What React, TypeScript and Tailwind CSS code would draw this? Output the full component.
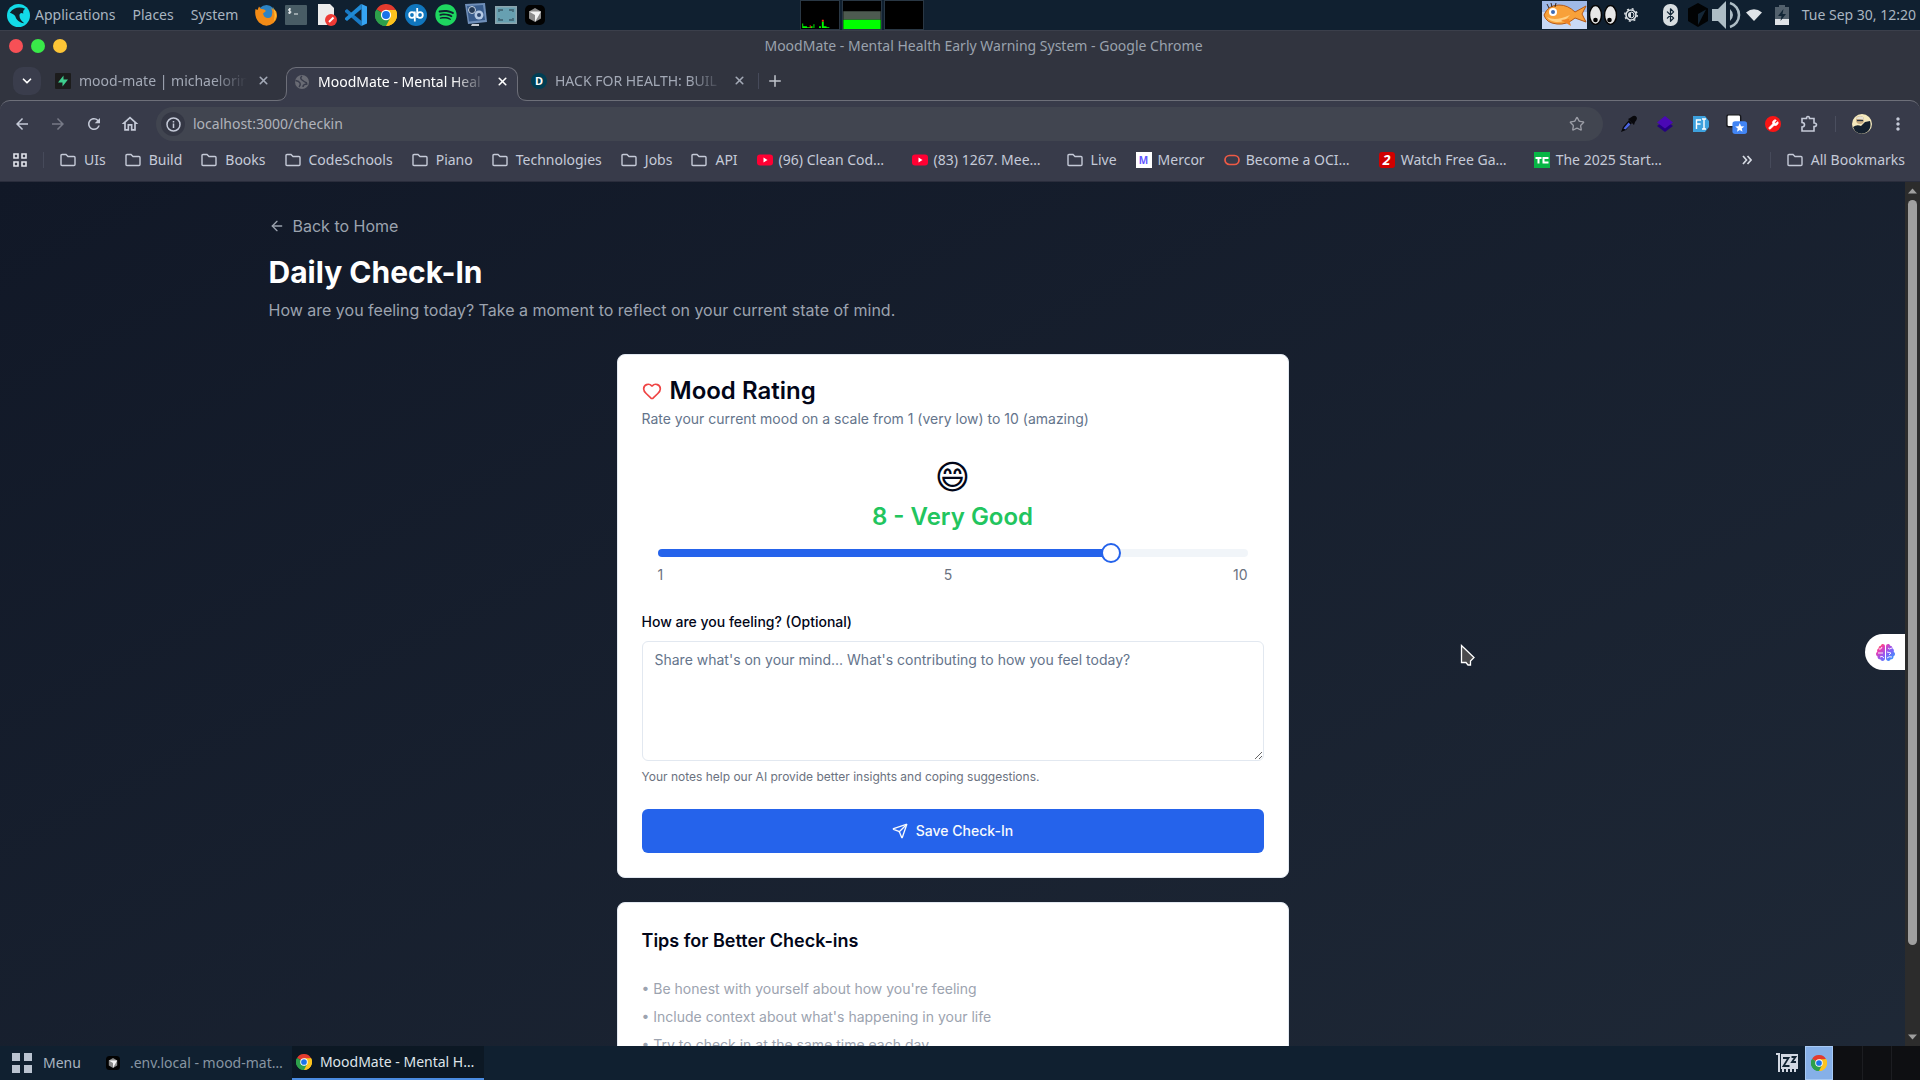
import { useState } from 'react'
import type { ReactNode } from 'react'
import clsx from 'clsx'
import { ArrowLeft, Bluetooth, ChevronDown, Heart, Plus, Send, Star, Wrench, X } from 'lucide-react'
import { FaBrain, FaSpotify } from 'react-icons/fa'
import { MdOutlineHome, MdRefresh, MdArrowBack, MdArrowForward, MdMoreVert } from 'react-icons/md'

const moodLabels = ['Terrible', 'Very Low', 'Low', 'Below Average', 'Okay', 'Fair', 'Good', 'Very Good', 'Great', 'Amazing']

const tips = [
  "Be honest with yourself about how you're feeling",
  "Include context about what's happening in your life",
  'Try to check in at the same time each day',
]

const bookmarks: { label: string; icon?: 'youtube' | 'mercor' | 'oracle' | 'two' | 'tc' }[] = [
  { label: 'UIs' },
  { label: 'Build' },
  { label: 'Books' },
  { label: 'CodeSchools' },
  { label: 'Piano' },
  { label: 'Technologies' },
  { label: 'Jobs' },
  { label: 'API' },
  { label: '(96) Clean Cod…', icon: 'youtube' },
  { label: '(83) 1267. Mee…', icon: 'youtube' },
  { label: 'Live' },
  { label: 'Mercor', icon: 'mercor' },
  { label: 'Become a OCI…', icon: 'oracle' },
  { label: 'Watch Free Ga…', icon: 'two' },
  { label: 'The 2025 Start…', icon: 'tc' },
]

export default function App() {
  return (
    <div className="flex h-screen flex-col overflow-hidden bg-[#102030] font-['Noto_Sans',sans-serif] text-sm">
      <TopPanel />
      <BrowserHeader />
      <main className="relative flex min-h-0 flex-1">
        <div className="min-w-0 flex-1 overflow-hidden">
          <CheckInPage />
        </div>
        <Scrollbar />
        <button
          aria-label="Open assistant"
          className="absolute top-[452px] right-[15px] flex h-9 w-10 items-center justify-center rounded-l-full bg-white"
        >
          <svg width="0" height="0" className="absolute">
            <linearGradient id="brain" x1="0" y1="0" x2="1" y2="1">
              <stop offset="0" stopColor="#ff9a1f" />
              <stop offset="0.25" stopColor="#ee3aae" />
              <stop offset="0.55" stopColor="#8b5cf6" />
              <stop offset="1" stopColor="#1fa8ff" />
            </linearGradient>
          </svg>
          <span className="relative">
            <FaBrain size={19} fill="url(#brain)" />
            <svg className="absolute inset-0" width="19" height="19" viewBox="0 0 19 19" fill="none" stroke="#fff" strokeWidth="0.9">
              <path d="M3 6Q5 7 6 4M2 10H7M4 14Q6 12 8 15M16 5Q13 7 12 5M11 9L15 10L13 12M16 14Q13 13 11 15" />
            </svg>
          </span>
        </button>
        <svg className="absolute top-[462px] left-[1460px]" width="16" height="24" viewBox="0 0 16 24">
          <path d="M1.500 1.500V18.500H6L8 21H10.500V17L14 13.500Z" fill="#4a4a4c" stroke="#fff" strokeWidth="1.300" />
        </svg>
      </main>
      <Taskbar />
    </div>
  )
}

function CheckInPage() {
  const [mood, setMood] = useState(8)
  const [notes, setNotes] = useState('')
  const ratio = (mood - 1) / 9

  return (
    <div className="bg-gradient-to-br from-[#111827] to-[#1f2937] font-['Inter',sans-serif] text-base">
      <div className="mx-auto max-w-[1400px] px-4 pt-8 pb-16">
        <a href="#home" className="mb-4 flex w-fit items-center gap-2 text-[#9ca3af]">
          <ArrowLeft className="h-4 w-4" />
          Back to Home
        </a>
        <h1 className="text-3xl font-bold text-white">Daily Check-In</h1>
        <p className="mt-2 text-[#9ca3af]">How are you feeling today? Take a moment to reflect on your current state of mind.</p>

        <div className="mx-auto mt-8 max-w-2xl space-y-6">
          <section className="rounded-lg border border-slate-200 bg-white p-6">
            <h2 className="flex items-center gap-2 text-2xl leading-6 font-semibold text-slate-950">
              <Heart className="h-5 w-5 text-[#ef4444]" />
              Mood Rating
            </h2>
            <p className="mt-1.5 text-sm text-[#64748b]">Rate your current mood on a scale from 1 (very low) to 10 (amazing)</p>

            <form className="mt-6" onSubmit={(e) => e.preventDefault()}>
              <div className="text-center">
                <div className="h-10 font-['DejaVu_Sans',sans-serif] text-[34px] leading-[48px] text-slate-950">😄</div>
                <div className="mt-2 text-2xl font-semibold text-[#22c55e]">
                  {mood} - {moodLabels[mood - 1]}
                </div>
              </div>
              <div className="mt-4 px-4">
                <input
                  type="range"
                  min={1}
                  max={10}
                  value={mood}
                  aria-label="Mood rating"
                  onChange={(e) => setMood(Number(e.target.value))}
                  style={{
                    background: `linear-gradient(to right, #2563eb calc(10px + (100% - 20px) * ${ratio}), #f1f5f9 0)`,
                  }}
                  className="block h-2 w-full appearance-none rounded-full [&::-webkit-slider-thumb]:h-5 [&::-webkit-slider-thumb]:w-5 [&::-webkit-slider-thumb]:appearance-none [&::-webkit-slider-thumb]:rounded-full [&::-webkit-slider-thumb]:border-2 [&::-webkit-slider-thumb]:border-[#2563eb] [&::-webkit-slider-thumb]:bg-white"
                />
                <div className="mt-2 flex justify-between text-sm text-[#6b7280]">
                  <span>1</span>
                  <span>5</span>
                  <span>10</span>
                </div>
              </div>

              <label htmlFor="notes" className="mt-6 block text-sm leading-[26px] font-medium text-slate-950">
                How are you feeling? (Optional)
              </label>
              <textarea
                id="notes"
                value={notes}
                onChange={(e) => setNotes(e.target.value)}
                placeholder="Share what's on your mind... What's contributing to how you feel today?"
                className="mt-1.5 block min-h-[120px] w-full rounded-md border border-slate-200 bg-white px-3 py-2 text-sm text-slate-950 placeholder:text-[#64748b]"
              />
              <p className="mt-2 text-xs text-[#6b7280]">Your notes help our AI provide better insights and coping suggestions.</p>

              <button className="mt-6 flex h-11 w-full items-center justify-center gap-2 rounded-md bg-[#2563eb] text-sm font-medium text-slate-50">
                <Send className="h-4 w-4" />
                Save Check-In
              </button>
            </form>
          </section>

          <section className="rounded-lg border border-slate-200 bg-white p-6">
            <h3 className="text-lg font-semibold text-slate-950">Tips for Better Check-ins</h3>
            <ul className="mt-6 space-y-2 text-sm text-[#9ca3af]">
              {tips.map((tip) => (
                <li key={tip}>• {tip}</li>
              ))}
            </ul>
          </section>
        </div>
      </div>
    </div>
  )
}

function Scrollbar() {
  return (
    <div className="flex w-[15px] flex-col items-center justify-between bg-[#2c2c2c] py-[6px]">
      <svg width="9" height="6" viewBox="0 0 9 6">
        <path d="M0 5.500L4.500 0.500L9 5.500Z" fill="#9f9f9f" />
      </svg>
      <div className="my-[6px] w-full flex-1 px-[3px]">
        <div className="h-[90%] rounded-full bg-[#9f9f9f]" />
      </div>
      <svg width="9" height="6" viewBox="0 0 9 6">
        <path d="M0 0.500L4.500 5.500L9 0.500Z" fill="#9f9f9f" />
      </svg>
    </div>
  )
}

function TopPanel() {
  return (
    <header className="flex h-[30px] shrink-0 items-center justify-between pr-1 pl-[7px] text-[#a9b5c0]">
      <div className="flex items-center">
        <svg width="23" height="23" viewBox="0 0 24 24">
          <circle cx="12" cy="12" r="12" fill="#12dbe8" />
          <path d="M3 9C7 3.500 13 2.500 19 5C17 6 16.500 8 17 10C15 8.500 13 9.500 13 12C13 15 15 18 18 20C13 19.500 10 17 8.500 12.500C7 10.500 5 9.500 3 9Z" fill="#10202b" />
        </svg>
        <nav className="ml-[5px] flex gap-[17px]">
          <button>Applications</button>
          <button>Places</button>
          <button>System</button>
        </nav>
        <div className="ml-[17px] flex items-center gap-2">
          <FirefoxIcon />
          <TerminalIcon />
          <svg width="22" height="22" viewBox="0 0 22 22">
            <path d="M3 0H15L19 4V21H3Z" fill="#ececec" />
            <circle cx="16" cy="16" r="6" fill="#ee3a35" />
            <path d="M14 18L18.500 13.500" stroke="#fff" strokeWidth="2" />
          </svg>
          <svg width="22" height="22" viewBox="0 0 22 22">
            <path d="M0 6.500L2 5L16.500 17V22L15.500 21.500L0 8Z" fill="#1879c4" />
            <path d="M0 15.500L2 17L16.500 5V0L15.500 0.500L0 14Z" fill="#1f8ad6" />
            <path d="M16.500 0L22 2.500V19.500L16.500 22Z" fill="#35a4f3" />
          </svg>
          <ChromeIcon size={22} />
          <svg width="22" height="22" viewBox="0 0 22 22">
            <circle cx="11" cy="11" r="11" fill="#1076bd" />
            <g fill="none" stroke="#fff" strokeWidth="1.800">
              <circle cx="7" cy="11" r="2.800" />
              <path d="M9.800 7.500V17.500M12.200 4V14" />
              <circle cx="15" cy="11" r="2.800" />
            </g>
          </svg>
          <FaSpotify size={22} color="#1ed760" />
          <svg width="22" height="24" viewBox="0 0 22 24">
            <path d="M0 1L20 0L22 19L3 21Z" fill="#6f8fb9" />
            <path d="M2 3L18 2L20 17L4 18.500Z" fill="#385c8c" />
            <circle cx="7" cy="7" r="3.500" fill="#263c58" stroke="#c6d4e4" />
            <circle cx="14" cy="12" r="4.500" fill="#b5cae4" />
            <circle cx="14" cy="12" r="2" fill="#2d4a74" />
            <path d="M7 21H14V23H6Z" fill="#c2c8cf" />
          </svg>
          <svg width="22" height="22" viewBox="0 0 22 22">
            <path d="M0 2H22V20H0Z" fill="#8ba4ad" />
            <path d="M1.500 3.500H20.500V18.500H1.500Z" fill="#67a0b1" />
            <path d="M4 8V6H8M14 6H18V8M18 14V16H14M8 16H4V14" fill="none" stroke="#456b7a" strokeWidth="1.800" />
          </svg>
          <CursorAppIcon size={20} />
        </div>

        <div className="ml-[255px] flex gap-[2px]">
          <svg width="40" height="30" viewBox="0 0 40 30" className="border border-[#293744] bg-black">
            <path d="M1 29V24H2V27H6V28H10V27H12V29ZM13 29V25H14V29H19V27H21V29H22V22H24V27H27V28H30V29Z" fill="#00ff00" />
            <path d="M9 26H10V29H9ZM22 20H24V22H22Z" fill="#ff2418" />
          </svg>
          <svg width="40" height="30" viewBox="0 0 40 30" className="border border-[#293744] bg-black">
            <path d="M0 11H40V20H0Z" fill="#4d5a50" />
            <path d="M0 20H40V30H0Z" fill="#00ff00" />
          </svg>
          <svg width="40" height="30" className="border border-[#293744] bg-black" />
        </div>
      </div>

      <div className="flex items-center">
        <FishIcon />
        <svg className="ml-[2px]" width="28" height="20" viewBox="0 0 28 20">
          <ellipse cx="6.500" cy="10" rx="6" ry="9.500" fill="#e7e7e7" stroke="#050505" strokeWidth="1.500" />
          <ellipse cx="21.500" cy="10" rx="6" ry="9.500" fill="#e7e7e7" stroke="#050505" strokeWidth="1.500" />
          <circle cx="6.500" cy="15" r="2.300" />
          <circle cx="20.500" cy="15" r="2.300" />
        </svg>
        <svg className="ml-[7px]" width="14" height="14" viewBox="0 0 14 14" fill="none" stroke="#dbe0e4">
          <circle cx="7" cy="7" r="5" strokeWidth="1.600" />
          <circle cx="7" cy="7" r="6.200" strokeWidth="1.500" strokeDasharray="2 2.870" />
          <path d="M7 4A3 3 0 0 0 7 10Z" fill="#dbe0e4" stroke="none" />
          <path d="M7 4A3 3 0 0 1 7 10" strokeWidth="1" />
        </svg>
        <span className="ml-[25px] flex h-[22px] w-[15px] items-center justify-center rounded-[7px] bg-[#d8dde0] text-[#122636]">
          <Bluetooth size={16} />
        </span>
        <svg className="ml-[10px]" width="20" height="24" viewBox="0 0 20 24">
          <path d="M10 0L20 5.500V18L10 24L0 18V5.500Z" fill="#020304" />
          <path d="M10 11L18 6.500L10 22Z" fill="#142636" />
        </svg>
        <svg className="ml-1" width="29" height="28" viewBox="0 0 29 28">
          <path d="M0 8H6L14 0V28L6 20H0Z" fill="#aebdc5" />
          <path d="M18 8Q24 14 18 20ZM18 8V20" fill="#aebdc5" />
          <path d="M18 2A12.500 12.500 0 0 1 18 26" fill="none" stroke="#aebdc5" strokeWidth="2.600" />
        </svg>
        <svg className="ml-[5px]" width="16" height="12" viewBox="0 0 16 12">
          <path d="M0 3.500Q8 -3 16 3.500L8 12Z" fill="#dfe3e7" />
        </svg>
        <svg className="ml-[13px]" width="14" height="20" viewBox="0 0 14 20">
          <path d="M4 0H10V2H14V20H0V2H4Z" fill="#52606c" />
          <path d="M0 14H14V20H0Z" fill="#dfe3e7" />
          <path d="M8.500 4L3 11H6.500L5.500 16L11 9H7.500Z" fill="#122636" />
        </svg>
        <time className="ml-[13px]">Tue Sep 30, 12:20</time>
      </div>
    </header>
  )
}

function BrowserHeader() {
  return (
    <div className="shrink-0 border-t border-[#3b3f4b] bg-[#31343f]">
      <div className="flex h-[30px] items-center text-[#9aa2ad]">
        <div className="flex w-[68px] gap-2 pl-[9px]">
          <button aria-label="Close" className="h-[14px] w-[14px] rounded-full bg-[#f75056]" />
          <button aria-label="Maximize" className="h-[14px] w-[14px] rounded-full bg-[#39ea49]" />
          <button aria-label="Minimize" className="h-[14px] w-[14px] rounded-full bg-[#fdc536]" />
        </div>
        <div className="flex-1 pr-[21px] text-center">MoodMate - Mental Health Early Warning System - Google Chrome</div>
      </div>

      <div className="flex h-[39px] items-end pl-[13px]">
        <button aria-label="Search tabs" className="mb-[5px] flex h-7 w-7 items-center justify-center rounded-[10px] bg-[#3a3d4c] text-white">
          <ChevronDown size={14} strokeWidth={3} />
        </button>
        <div className="ml-[7px] flex items-end gap-[6px]">
          <Tab
            title="mood-mate | michaelorin"
            icon={
              <svg width="16" height="16" viewBox="0 0 16 16">
                <rect width="16" height="16" rx="1" fill="#1c1c1c" />
                <path d="M8.500 2.500V6.500H13L7.500 13.500V9.500H3Z" fill="#3ecf8e" />
              </svg>
            }
          />
          <Tab
            active
            title="MoodMate - Mental Heal"
            icon={
              <svg width="16" height="16" viewBox="0 0 16 16">
                <circle cx="8" cy="8" r="7" fill="#696b74" />
                <path d="M1.500 6.500Q5 7 6 9T5 13M8 2Q5.500 4 8 6T13 9M9 13Q9 10 13.500 10" fill="none" stroke="#383b4a" strokeWidth="1.500" />
              </svg>
            }
          />
          <Tab
            title="HACK FOR HEALTH: BUIL"
            icon={
              <span className="flex h-4 w-4 items-center justify-center rounded-full bg-[#003e54] text-[11px] leading-4 font-bold text-white">D</span>
            }
          />
        </div>
        <span className="mb-[11px] ml-[2px] h-4 w-px bg-[#464a5a]" />
        <button aria-label="New tab" className="mb-[10px] ml-[7px] text-[#c0c4cd]">
          <Plus size={18} />
        </button>
      </div>

      <div className="rounded-t-[10px] border-t border-[#6d6f79] bg-[#383b4a] text-[#c5cad8]">
        <div className="flex h-[46px] items-center px-[12px]">
          <div className="flex gap-4">
            <IconButton label="Back"><MdArrowBack size={18} /></IconButton>
            <IconButton label="Forward"><MdArrowForward size={18} className="text-[#777a87]" /></IconButton>
            <IconButton label="Reload"><MdRefresh size={18} /></IconButton>
            <IconButton label="Home"><MdOutlineHome size={20} /></IconButton>
          </div>
          <div className="ml-4 flex h-[34px] flex-1 items-center rounded-full bg-[#414550] pr-4 pl-[5px]">
            <span className="flex h-6 w-6 items-center justify-center rounded-full bg-[#343744]">
              <svg width="15" height="15" viewBox="0 0 15 15" fill="none" stroke="#c5cad8" strokeWidth="1.500">
                <circle cx="7.500" cy="7.500" r="6.500" />
                <path d="M7.500 6.500V11M7.500 4V5.500" />
              </svg>
            </span>
            <input
              aria-label="Address"
              defaultValue="localhost:3000/checkin"
              className="ml-2 min-w-0 flex-1 bg-transparent text-sm text-[#b0b3bb]"
            />
            <IconButton label="Bookmark this page"><Star size={16} className="text-[#9b9da6]" /></IconButton>
          </div>
          <div className="ml-4 flex items-center gap-4">
            <IconButton label="Color picker">
              <svg width="18" height="18" viewBox="0 0 18 18">
                <path d="M1 17L3 12L9 5L12 8L6 15Z" fill="#08080c" />
                <path d="M3.500 13.500L8.500 7.500L10.500 9.500L5.500 14.500Z" fill="#4c66e2" />
                <path d="M8 4L10 3L13 1Q16 0 17 3Q17 5 15 7L14 10Z" fill="#08080c" />
              </svg>
            </IconButton>
            <IconButton label="Layers">
              <svg width="18" height="18" viewBox="0 0 18 18">
                <path d="M1 11L9 5L17 11L9 17Z" fill="#250082" />
                <path d="M1 7.500L9 1L17 7.500L9 13.500Z" fill="#4a08b5" />
              </svg>
            </IconButton>
            <IconButton label="Font identifier">
              <svg width="16" height="16" viewBox="0 0 16 16">
                <path d="M0 0H12L16 5V11L12 16H0Z" fill="#3ea1dd" />
                <path d="M3.500 13V4H8M3.500 8H7.500M9 3H13M9 13H13M11 3V13" stroke="#fff" strokeWidth="1.400" fill="none" />
              </svg>
            </IconButton>
            <IconButton label="Tab saver">
              <svg width="22" height="22" viewBox="0 0 24 22" className="shrink-0">
                <rect x="1" y="1" width="15" height="13" rx="2" fill="#fff" stroke="#15161b" strokeWidth="1.500" />
                <rect x="7" y="8" width="16" height="14" rx="3" fill="#4285f4" />
                <path d="M15 10L16.400 13.500L20 13.800L17.200 16L18 19.500L15 17.500L12 19.500L12.800 16L10 13.800L13.600 13.500Z" fill="#fff" />
              </svg>
            </IconButton>
            <IconButton label="Toolbox">
              <span className="flex h-4 w-4 items-center justify-center rounded-full bg-[#fa1515]">
                <Wrench size={11} fill="white" className="text-white" />
              </span>
            </IconButton>
            <IconButton label="Extensions">
              <svg width="18" height="18" viewBox="0 0 18 18" fill="none" stroke="#c5cad8" strokeWidth="1.600">
                <path d="M2 3.500H6.500Q6.500 1.500 8 1.500T9.500 3.500H14V8Q16.500 8 16.500 9.700T14 11.500V16H2V12Q4.500 12 4.500 9.800T2 7.500Z" />
              </svg>
            </IconButton>
          </div>
          <span className="ml-4 h-4 w-px bg-[#4a4e5e]" />
          <button aria-label="Profile" className="ml-4">
            <svg width="20" height="20" viewBox="0 0 20 20">
              <circle cx="10" cy="10" r="10" fill="#f5e9bd" />
              <path d="M1 13Q5 10 9 12L13 8L18 7Q20 14 15 18Q9 22 3 17Z" fill="#14202e" />
              <circle cx="8" cy="6" r="4" fill="#c8ac82" />
              <path d="M4 5Q6 1 11 3L12 6L8 5Z" fill="#e7e2d4" />
              <path d="M5 6.500H11" stroke="#2a3642" strokeWidth="1.300" />
            </svg>
          </button>
          <span className="ml-4">
            <IconButton label="Menu"><MdMoreVert size={20} /></IconButton>
          </span>
        </div>

        <nav className="flex h-[35px] items-start justify-between border-b border-[#2a2d3c] pt-[3px] pr-[15px] pl-[13px]">
          <div className="flex items-center">
            <button aria-label="Apps">
              <svg width="14" height="14" viewBox="0 0 14 14" fill="none" stroke="#e1e4eb" strokeWidth="1.600">
                <path d="M1 1H5V5H1ZM9 1H13V5H9ZM1 9H5V13H1ZM9 9H13V13H9Z" />
              </svg>
            </button>
            <span className="mr-4 ml-4 h-4 w-px bg-[#464a5a]" />
            <div className="flex gap-[19px]">
              {bookmarks.map((b) => (
                <a key={b.label} href="#bookmark" className={clsx('flex items-center whitespace-nowrap', b.icon ? 'gap-[6px]' : 'gap-2')}>
                  <BookmarkIcon icon={b.icon} />
                  <span className={b.label.endsWith('…') ? 'w-[114px]' : ''}>{b.label}</span>
                </a>
              ))}
            </div>
          </div>
          <div className="flex items-center">
            <button aria-label="More bookmarks">
              <svg width="10" height="10" viewBox="0 0 10 10" fill="none" stroke="#d5d9e2" strokeWidth="1.700">
                <path d="M1 1L4.500 5L1 9M5.500 1L9 5L5.500 9" />
              </svg>
            </button>
            <span className="mr-4 ml-[18px] h-4 w-px bg-[#464a5a]" />
            <a href="#all" className="flex items-center gap-2">
              <BookmarkIcon />
              All Bookmarks
            </a>
          </div>
        </nav>
      </div>
    </div>
  )
}

function IconButton({ label, children }: { label: string; children: ReactNode }) {
  return (
    <button aria-label={label} className="flex h-5 w-5 items-center justify-center">
      {children}
    </button>
  )
}

function Tab({ title, icon, active }: { title: string; icon: ReactNode; active?: boolean }) {
  return (
    <div
      className={clsx(
        'relative flex w-[232px] items-center pb-[6px] pl-[7px]',
        active ? 'z-10 -mb-px h-[34px] rounded-t-[10px] border border-b-0 border-[#6d6f79] bg-[#383b4a] text-white' : 'h-[33px] text-[#a3a9b6]',
      )}
    >
      {active ? (
        <>
          <TabFlare className="absolute bottom-0 -left-[10px]" />
          <TabFlare className="absolute -right-[10px] bottom-0 -scale-x-100" />
        </>
      ) : null}
      {icon}
      <a href="#tab" className="ml-2 w-[168px] whitespace-nowrap [mask-image:linear-gradient(to_right,black_80%,transparent)]">
        {title}
      </a>
      <button aria-label="Close tab" className="ml-[10px]">
        <X size={13} strokeWidth={3} />
      </button>
    </div>
  )
}

function TabFlare({ className }: { className: string }) {
  return (
    <svg width="10" height="10" viewBox="0 0 10 10" className={className}>
      <path d="M10 0V10H0V9.500Q9.500 9.500 9.500 0Z" fill="#383b4a" />
      <path d="M0 9.500Q9.500 9.500 9.500 0" fill="none" stroke="#6d6f79" />
    </svg>
  )
}

function BookmarkIcon({ icon }: { icon?: string }) {
  if (icon === 'youtube') {
    return (
      <svg width="16" height="16" viewBox="0 0 16 16">
        <rect y="2.500" width="16" height="11" rx="3" fill="#ff0033" />
        <path d="M6.500 5.500V10.500L10.500 8Z" fill="#fff" />
      </svg>
    )
  }
  if (icon === 'mercor') {
    return <span className="flex h-4 w-4 items-center justify-center bg-white text-[10px] font-bold text-[#6257ff]">M</span>
  }
  if (icon === 'oracle') {
    return (
      <svg width="16" height="16" viewBox="0 0 16 16">
        <rect x="1" y="3.500" width="14" height="9" rx="4.500" fill="none" stroke="#ee5a45" strokeWidth="1.700" />
      </svg>
    )
  }
  if (icon === 'two') {
    return <span className="flex h-4 w-4 items-center justify-center rounded-[3px] bg-[#d00000] text-[14px] leading-4 font-bold text-white italic">2</span>
  }
  if (icon === 'tc') {
    return (
      <svg width="16" height="16" viewBox="0 0 16 16">
        <rect width="16" height="16" fill="#08b545" />
        <path d="M1.500 6H7.500M4.500 6V11.500M14.500 6H9.500V10.500H14.500" fill="none" stroke="#fff" strokeWidth="2" />
      </svg>
    )
  }
  return (
    <svg width="16" height="16" viewBox="0 0 16 16">
      <path d="M1 3.500Q1 2.500 2 2.500H6L8 4.500H14Q15 4.500 15 5.500V12.500Q15 13.500 14 13.500H2Q1 13.500 1 12.500Z" fill="none" stroke="#c5cad8" strokeWidth="1.400" />
    </svg>
  )
}

function Taskbar() {
  return (
    <footer className="flex h-[34px] shrink-0 items-center justify-between">
      <div className="flex h-full items-center">
        <button className="ml-3 flex items-center gap-[11px] text-[#a9b5c0]">
          <svg width="20" height="20" viewBox="0 0 20 20">
            <path d="M0 0H8V8H0ZM12 0H20V8H12ZM0 12H8V20H0ZM12 12H20V20H12Z" fill="#bac3d0" />
          </svg>
          Menu
        </button>
        <button className="ml-[25px] flex w-[186px] items-center gap-[10px] whitespace-nowrap text-[#8795a2]">
          <CursorAppIcon size={14} />
          .env.local - mood-mat…
        </button>
        <button className="flex h-full w-48 items-center gap-2 border-b-2 border-[#4a8be0] bg-[#0c1824] pl-1 whitespace-nowrap text-[#dfe5ea]">
          <ChromeIcon size={16} />
          MoodMate - Mental H…
        </button>
      </div>
      <div className="flex h-full items-center">
        <svg width="22" height="20" viewBox="0 0 22 20">
          <path d="M0 0H4V19H2V2H0ZM5 1H22V16H20V19H18V16H16V19H14V16H12V19H10V16H8V19H6V16H5Z" fill="#d2d8e2" />
          <path d="M7 5H12.500L7.500 13H13.500M15.500 4H19.500L16 9H20" fill="none" stroke="#122433" strokeWidth="1.800" />
        </svg>
        <div className="ml-[7px] flex h-full">
          <span className="flex w-7 items-center justify-center border border-[#a8caf5] bg-[#86b0e8]">
            <ChromeIcon size={16} />
          </span>
          <span className="w-[29px] bg-[#0e0f12]" />
          <span className="w-[29px] border-l border-[#1c1d21] bg-[#0e0f12]" />
          <span className="w-[29px] border-l border-[#1c1d21] bg-[#0e0f12]" />
        </div>
      </div>
    </footer>
  )
}

function ChromeIcon({ size }: { size: number }) {
  return (
    <svg width={size} height={size} viewBox="0 0 24 24">
      <path d="M12 12L1.600 6A12 12 0 0 1 22.400 6Z" fill="#e33b2e" />
      <path d="M12 12L22.400 6A12 12 0 0 1 12 24Z" fill="#fcc31e" />
      <path d="M12 12V24A12 12 0 0 1 1.600 6Z" fill="#2da04b" />
      <path d="M12 6.500H22.700A12 12 0 0 1 12 24L17 14.500Z" fill="#fcc31e" />
      <path d="M1.600 6L7.200 14.800L12 17.500L16.800 14.800L12 24A12 12 0 0 1 1.600 6Z" fill="#2da04b" />
      <circle cx="12" cy="12" r="5.600" fill="#fff" />
      <circle cx="12" cy="12" r="4.300" fill="#1a73e8" />
    </svg>
  )
}

function FirefoxIcon() {
  return (
    <svg width="22" height="22" viewBox="0 0 22 22">
      <circle cx="11.500" cy="10" r="9" fill="#2c83c4" />
      <path d="M0.500 5L2.500 6L4 2.500L6 5Q9 4.500 11 7L8 9.500Q9 14 13 14Q17 14 17 10Q18 7 16 4L21 7Q24 14 18.500 19Q11 24.500 4 18.500Q-1 13 0.500 5Z" fill="#f28b16" />
      <path d="M18 3Q24 11 18.500 18Q21 11 18 3Z" fill="#ffc233" />
    </svg>
  )
}

function TerminalIcon() {
  return (
    <svg width="22" height="22" viewBox="0 0 22 22">
      <rect y="1" width="22" height="20" rx="1" fill="#485c65" />
      <path d="M6 5Q3 4.500 3.500 6.300Q6.500 7 6 8.500Q5 9.500 3 8.800M4.700 4V10M9 10H13" fill="none" stroke="#e9eef0" />
    </svg>
  )
}

function CursorAppIcon({ size }: { size: number }) {
  return (
    <svg width={size} height={size} viewBox="0 0 20 20">
      <rect width="20" height="20" rx="5" fill="#020202" />
      <path d="M10 3L16 6.500V13.500L10 17L4 13.500V6.500Z" fill="#8b8b8b" />
      <path d="M4 6.500H16L10 17V10Z" fill="#f3f3f3" />
    </svg>
  )
}

function FishIcon() {
  return (
    <svg width="45" height="28" viewBox="0 0 45 28">
      <rect width="45" height="28" fill="#c9d9f5" />
      <rect width="45" height="11" fill="#9fb9e8" />
      <path d="M2 14Q6 4 17 4Q26 4 33 11L44 5L40 13L44 21L33 17Q25 24 15 23Q4 22 2 14Z" fill="#f8a13a" stroke="#b65a17" />
      <path d="M5 16Q13 21 28 14Q22 22 14 21Q7 20 5 16Z" fill="#ffd185" />
      <path d="M19 19L29 25L27 18Z" fill="#ef8426" />
      <circle cx="11" cy="11" r="4" fill="#fff" />
      <circle cx="11" cy="11" r="2" fill="#3e6bb5" />
      <path d="M7 7L5 3M10 6L9 2M13 6L14 2" stroke="#36251d" />
    </svg>
  )
}
